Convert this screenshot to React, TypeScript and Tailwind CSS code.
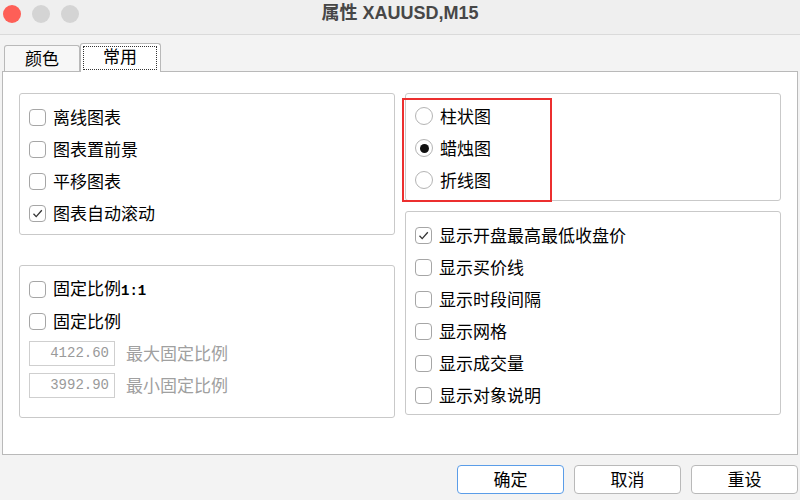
import React from "react";

const cjk = { fontFamily: '"Noto Sans CJK SC", "Noto Sans", sans-serif' };
const mono = { fontFamily: '"Liberation Mono", "DejaVu Sans Mono", monospace' };
const title = { fontFamily: '"Liberation Sans", "Noto Sans CJK SC", sans-serif' };

function CheckBox({ checked }: { checked?: boolean }) {
  return (
    <span className="flex h-[17px] w-[17px] shrink-0 items-center justify-center rounded-[4px] border border-[#a6a6a6] bg-white">
      {checked && (
        <svg width="13" height="13" viewBox="0 0 13 13">
          <polyline points="2.5,6.8 5.2,9.6 10.8,3.2" fill="none" stroke="#333" strokeWidth="1.3" />
        </svg>
      )}
    </span>
  );
}

function Radio({ checked }: { checked?: boolean }) {
  return (
    <span className="flex h-[18px] w-[18px] shrink-0 items-center justify-center rounded-full border border-[#b4b4b4] bg-white">
      {checked && <span className="h-[9px] w-[9px] rounded-full bg-[#111]" />}
    </span>
  );
}

function Label({ children, muted }: { children: React.ReactNode; muted?: boolean }) {
  return (
    <span
      className={`-mt-[2px] text-[17px] font-normal leading-none ${muted ? "text-[#a0a0a0]" : "text-black"}`}
      style={cjk}
    >
      {children}
    </span>
  );
}

function CheckRow({ label, checked, suffix }: { label: string; checked?: boolean; suffix?: string }) {
  return (
    <div className="flex h-[32px] items-center gap-[7px]">
      <CheckBox checked={checked} />
      <Label>
        {label}
        {suffix && (
          <span className="text-[14px] font-bold" style={mono}>
            {suffix}
          </span>
        )}
      </Label>
    </div>
  );
}

function RadioRow({ label, checked }: { label: string; checked?: boolean }) {
  return (
    <div className="flex h-[32px] items-center gap-[7px]">
      <Radio checked={checked} />
      <Label>{label}</Label>
    </div>
  );
}

function NumberField({ value, label }: { value: string; label: string }) {
  return (
    <div className="flex h-[32px] items-center gap-[11px]">
      <div className="flex h-[25px] w-[86px] items-center justify-end border border-[#cfcfcf] bg-white pr-[5px]">
        <span className="text-[14px] leading-none text-[#9a9a9a]" style={mono}>
          {value}
        </span>
      </div>
      <Label muted>{label}</Label>
    </div>
  );
}

function Group({ className, children }: { className: string; children: React.ReactNode }) {
  return <div className={`rounded-[3px] border border-[#c9c9c9] bg-white pl-[9px] ${className}`}>{children}</div>;
}

function DialogButton({ label, focused }: { label: string; focused?: boolean }) {
  return (
    <button
      className={`flex h-[29px] w-[107px] items-center justify-center rounded-[4px] border bg-white ${
        focused ? "border-[#5b9de8]" : "border-[#b9b9b9]"
      }`}
    >
      <Label>{label}</Label>
    </button>
  );
}

export default function App() {
  return (
    <div className="flex h-[500px] w-[800px] flex-col overflow-hidden bg-[#f3f3f3]">
      {/* window title bar */}
      <div className="relative flex h-[35px] shrink-0 items-center justify-center border-b border-[#dadada] bg-[#efefef]">
        <div className="absolute left-[3px] top-[5px] flex gap-[11px]">
          <span className="h-[18px] w-[18px] rounded-full bg-[#fe5f57]" />
          <span className="h-[18px] w-[18px] rounded-full bg-[#d4d4d4]" />
          <span className="h-[18px] w-[18px] rounded-full bg-[#d4d4d4]" />
        </div>
        <span className="-mt-[7px] text-[18px] font-bold text-[#474747]" style={title}>
          属性 XAUUSD,M15
        </span>
      </div>

      {/* tabs */}
      <div className="mt-[8px] flex h-[28px] items-end pl-[4px]">
        <div className="flex h-[26px] w-[76px] items-center justify-center rounded-t-[3px] border border-b-0 border-[#b9b9b9] bg-[#f7f7f7]">
          <Label>颜色</Label>
        </div>
        <div className="relative z-10 -mb-px flex h-[29px] w-[81px] rounded-t-[3px] border border-b-0 border-[#b9b9b9] bg-white pb-[2px] pl-[2px] pr-[3px] pt-[2px]">
          <div className="flex flex-1 items-center justify-center border border-dotted border-[#333]">
            <span className="-mt-[2px]">
              <Label>常用</Label>
            </span>
          </div>
        </div>
      </div>

      {/* tab page */}
      <div className="relative mx-[2px] flex h-[384px] gap-[10px] border border-[#b9b9b9] bg-white pl-[16px] pt-[21px]">
        <div className="flex w-[376px] flex-col gap-[30px]">
          <Group className="h-[142px] pt-[7px]">
            <CheckRow label="离线图表" />
            <CheckRow label="图表置前景" />
            <CheckRow label="平移图表" />
            <CheckRow label="图表自动滚动" checked />
          </Group>
          <Group className="h-[153px] pt-[7px]">
            <CheckRow label="固定比例" suffix="1:1" />
            <CheckRow label="固定比例" />
            <NumberField value="4122.60" label="最大固定比例" />
            <NumberField value="3992.90" label="最小固定比例" />
          </Group>
        </div>
        <div className="flex w-[376px] flex-col gap-[10px]">
          <Group className="h-[108px] pt-[6px]">
            <RadioRow label="柱状图" />
            <RadioRow label="蜡烛图" checked />
            <RadioRow label="折线图" />
          </Group>
          <Group className="h-[204px] pt-[7px]">
            <CheckRow label="显示开盘最高最低收盘价" checked />
            <CheckRow label="显示买价线" />
            <CheckRow label="显示时段间隔" />
            <CheckRow label="显示网格" />
            <CheckRow label="显示成交量" />
            <CheckRow label="显示对象说明" />
          </Group>
        </div>
        {/* highlight around the chart type options */}
        <div className="pointer-events-none absolute left-[399px] top-[26px] h-[104px] w-[150px] border-2 border-[#ec2f2f]" />
      </div>

      {/* dialog buttons */}
      <div className="mt-[10px] flex justify-end gap-[10px] pr-[2px]">
        <DialogButton label="确定" focused />
        <DialogButton label="取消" />
        <DialogButton label="重设" />
      </div>
    </div>
  );
}
